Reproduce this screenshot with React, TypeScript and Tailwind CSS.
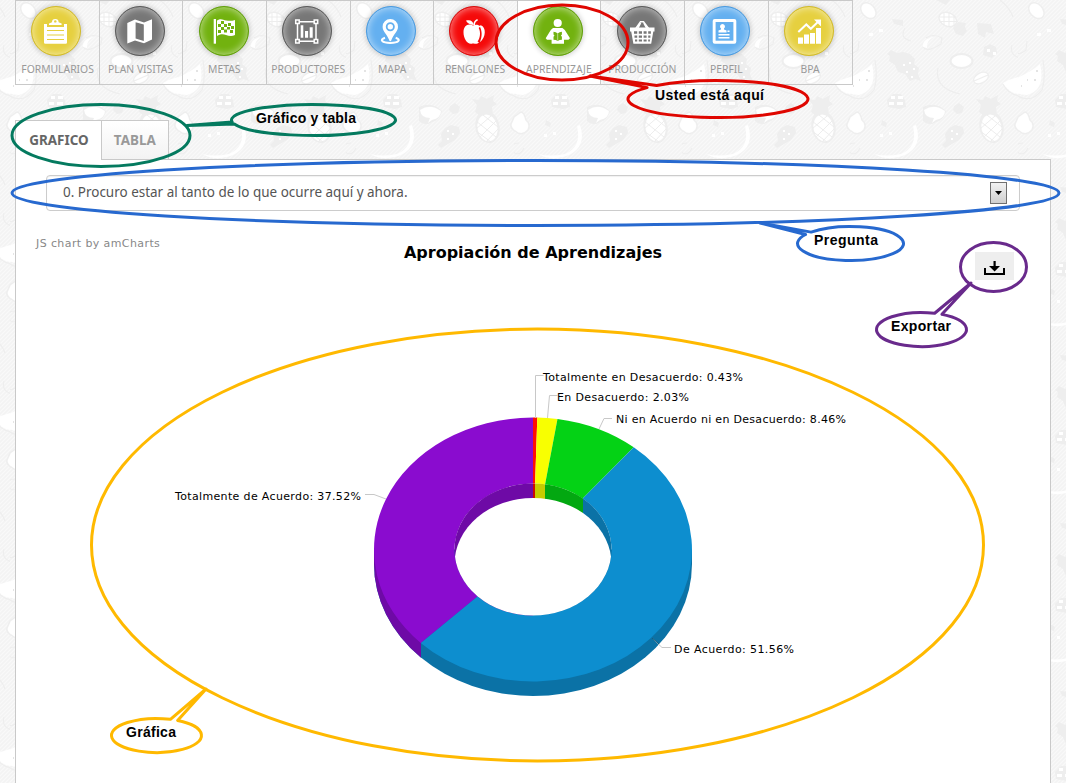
import React from "react";

const NavIcon = ({ name }: { name: string }) => {
  switch (name) {
    case "form":
      return (
        <g>
          <path d="M13 18h3v2h17v-2h3v18.5a1.2 1.2 0 0 1-1.2 1.2H14.2a1.2 1.2 0 0 1-1.2-1.2z" fill="#fff" />
          <path d="M18 19v-1.600l3-1.200a3.300 3.300 0 1 1 6.600 0l3 1.200V19z" fill="#fff" />
          <circle cx="24.300" cy="15.400" r="1.200" fill="#e6d03f" />
          <path d="M16 20.500h17M16 24.500h17M16 29h17M16 33.500h17" stroke="#e6d03f" strokeWidth="1.200" />
        </g>
      );
    case "map":
      return (
        <path
          fill="#fff"
          fillRule="evenodd"
          d="M12.300 17 20 13.400 29 16.400 37 13.300V33.500L29 37.200 20 34.600 12.300 37.500ZM20.600 16.200V32.600L28.800 35V18.600Z"
        />
      );
    case "flag":
      return (
        <g>
          <path d="M14.700 13H17v24.700h-2.300z" fill="#fff" />
          <path d="M18 14.500c4-2.500 6-.5 9 0s6 .5 9-.5v15c-3 1.500-6 1-9 0s-6-1-9 1z" fill="#fff" />
          <path
            fill="#72b20f"
            d="M22 15h3v3h-3zM29 17h3v3h-3zM19 18h3v3h-3zM25 18h3v3h-3zM32 20h3v3h-3zM22 21h3v3h-3zM28 21h3v2.500h-3zM19 24h3v3h-3zM25 23.500h3v3h-3zM31 24h3v3h-3z"
          />
        </g>
      );
    case "chart":
      return (
        <g>
          <path d="M15.500 15.700h18.500v19.600H15.500z" fill="none" stroke="#fff" strokeWidth="1.500" />
          <path
            d="M13.700 14h3.500v3.500h-3.500zM32.200 14h3.500v3.500h-3.500zM13.700 33.500h3.500V37h-3.500zM32.200 33.500h3.500V37h-3.500z"
            fill="#777"
            stroke="#fff"
            strokeWidth="1.500"
          />
          <path d="M18.700 19.300h2.600v12.400h-2.600zM23 25h3.100v6.700H23zM27.700 21.300h3v10.400h-3z" fill="#fff" />
        </g>
      );
    case "pin":
      return (
        <g>
          <path
            fill="#fff"
            d="M24.300 13a7.700 7.700 0 0 1 7.700 7.700c0 4.800-4.500 7.500-6.700 13.500a1 1 0 0 1-2 0C21 28.200 16.600 25.500 16.600 20.700a7.700 7.700 0 0 1 7.700-7.700Z"
          />
          <circle cx="24.300" cy="20.700" r="3.600" fill="#fff" stroke="#64b0f0" strokeWidth="1.800" />
          <path d="M19 31.800c-6 2-3 5 5.300 5.200 8.400-.2 11.300-3.200 5.400-5.200" fill="none" stroke="#fff" strokeWidth="2" />
        </g>
      );
    case "apple":
      return (
        <g fill="#fff">
          <path d="M24 19.500c-5-2.700-9.500.2-9.500 6.700 0 6.200 4 12.500 8.200 11.500 1-.3 2-.3 3 0 2 .3 3-.2 4.300-1.500l-1.500-.8c2.500-3 3.600-8.800 1.200-13.400l1.700-1.500c-2-2-5-2-7.400-1z" />
          <path d="M31.800 19.300c5.500 1.500 5.500 12.500-1 16.900 2.400-5 2.700-11.500-.4-16.200z" />
          <path d="M24.500 19c-4-.3-6.500-1.800-7.500-4.400 4.400-1 7 .2 7.500 4.400Z" />
          <path d="M24.200 19c.3-3 1.600-4.700 4-6l.8 1.200c-2.300 1.200-3 2.700-3 4.800z" />
        </g>
      );
    case "reader":
      return (
        <g>
          <circle cx="24.700" cy="17" r="4.100" fill="#fff" />
          <path d="M20 22h9.400l2.400 2 5.200 8.300-1.500 1.500h-4.500v4H18.600v-4H14l-1.300-1.500L17.800 24z" fill="#fff" />
          <path d="M20.500 25.700q2.500.2 4.200 1.700 1.700-1.500 4.200-1.700v2.800l-1 1 1 1.200v3q-2.500 0-4.200 1.300-1.700-1.300-4.200-1.300v-3l1-1.200-1-1z" fill="#72b20f" />
          <path d="M24.700 27.500v7" stroke="#fff" strokeWidth=".5" />
        </g>
      );
    case "basket":
      return (
        <g>
          <path d="m18.500 23 5-7.300h3L32 23M21 22l2.600-5M29.500 22l-2.700-5" fill="none" stroke="#fff" strokeWidth="1.500" />
          <path d="M13 21.500h24.500v4h-1.200l-2.100 12.200H16.400l-2.200-12.200H13z" fill="#fff" />
          <path
            d="M17 25.300h3.200v2.400H17zM21.800 25.300H25v2.400h-3.200zM26.600 25.300h3v2.400h-3zM31.200 25.300h2.700v2.400h-2.700zM17.500 29.500h2.700v2.300h-2.700zM21.800 29.500H25v2.300h-3.200zM26.600 29.500h3v2.300h-3zM31.200 29.500h2.200v2.300h-2.200zM18 33.500h2.200v2h-2.200zM21.800 33.500H25v2h-3.200zM26.600 33.500h3v2h-3zM31.200 33.500h1.700v2h-1.700z"
            fill="#777"
          />
        </g>
      );
    case "profile":
      return (
        <g>
          <rect x="12.700" y="13" width="23.600" height="24.700" rx="2" fill="#fff" />
          <rect x="15.600" y="16" width="17.800" height="18.700" fill="#64b0f0" />
          <path d="M22.500 18a2.500 2.500 0 0 1 1.500 4.500v1l2.500 1v2h-8v-2l2.500-1v-1A2.500 2.500 0 0 1 22.500 18ZM18.500 28h11v1.400h-11zM18.500 31h11v1.400h-11zM27.500 24.500h2v1.500h-2z" fill="#fff" />
        </g>
      );
    default:
      return (
        <g>
          <path d="M14 31.500h5v6.200h-5zM20 28.500h5v9.200h-5zM26 27h5v10.700h-5zM32 22h5v15.700h-5z" fill="#fff" />
          <path d="m14.300 26 8-7.500 4.500 4.300 7.300-7" fill="none" stroke="#fff" strokeWidth="2" />
          <path d="M30 13.500h7v7z" fill="#fff" />
        </g>
      );
  }
};

const yellow = "bg-[#e6d03f] border-[#d2bb2c]";
const gray = "bg-[#777777] border-[#5c5c5c]";
const green = "bg-[#72b20f] border-[#62a00c]";
const blue = "bg-[#64b0f0] border-[#4a9be0]";
const red = "bg-[#f50a0a] border-[#d81010]";

const items = [
  { label: "FORMULARIOS", icon: "form", tone: yellow },
  { label: "PLAN VISITAS", icon: "map", tone: gray },
  { label: "METAS", icon: "flag", tone: green },
  { label: "PRODUCTORES", icon: "chart", tone: gray },
  { label: "MAPA", icon: "pin", tone: blue },
  { label: "RENGLONES", icon: "apple", tone: red },
  { label: "APRENDIZAJE", icon: "reader", tone: green, active: true },
  { label: "PRODUCCIÓN", icon: "basket", tone: gray },
  { label: "PERFIL", icon: "profile", tone: blue },
  { label: "BPA", icon: "bpa", tone: yellow },
];

const FruitWallpaper = () => (
  <svg className="absolute inset-0 -z-10" width="1066" height="783" aria-hidden="true">
    <defs>
      <pattern id="weave" width="4" height="4" patternUnits="userSpaceOnUse">
        <rect width="4" height="4" fill="#f3f3f3" />
        <path d="M0 4 4 0M-1 1 1-1M3 5 5 3" stroke="#fafafa" strokeWidth="1.200" />
      </pattern>
      <pattern id="fruit" x="850" y="0" width="168" height="168" patternUnits="userSpaceOnUse">
        <g fill="#eeeeee">
          <path d="m103 28 5-6 8 1-1 4 2 4-4 5-7-2z" />
          <ellipse cx="98" cy="19.500" rx="10" ry="7.500" transform="rotate(25 98 19)" />
          <path d="m41 50 6 3 6-1 7 2 5 5-1 5 5 4-1 6 3 7-6-2-5 2-5-7-7-2-3-7-6-4 1-5-3-2z" />
          <path d="m37 100 6-6 8 0 4 6 1 7-7 2-11-2z" />
          <path d="m129 112 2-7-5-6 7 1 2-4 6 3 7-4-1 6 4 3-5 3 1 8-9 4z" />
          <ellipse cx="141.500" cy="127" rx="12" ry="16.500" transform="rotate(-12 141 127)" />
          <path d="m95 134 4-6 6-3 8 2 1 6-5 7-7 4-7 4-3-3 4-4z" />
          <path d="m134 47 6-3 6 3 1 6-5 5-9-3zM104 106l5-3 5 4-2 6-5 1-4-4zM127 23l14 1 3 10-8-2-1 6-7-4zM42 19l11 1v6l-9-2zM86 0h14l-4 5zM32 120l5 3-1 4-5-2z" />
          <path d="M73 107q13-6 23 4-2 9-10 11-7 5-13-1z" />
        </g>
        <g fill="#fff">
          <ellipse cx="18.500" cy="11" rx="6.500" ry="9" transform="rotate(-43 18 11)" stroke="#eee" strokeWidth="1.500" />
          <path d="M-15 83Q10 75 22 64 28 90 9 95-7 94-15 83Z" />
          <ellipse cx="111.500" cy="61" rx="11" ry="7" stroke="#eee" strokeWidth="2" />
          <ellipse cx="131" cy="78" rx="8" ry="5" transform="rotate(-28 131 78)" stroke="#eee" strokeWidth="1.300" />
          <path d="M74 110q10-7 21 1 0 7-9 9l-4 3 2-5q-9 0-10-8Z" />
          <path d="M0 117 7 112q3 0 5 8 5 4 2 10-6 7-13 1-5-3-4-7Z" stroke="#eee" strokeWidth="1.500" />
          <path d="M168 117 175 112q3 0 5 8 5 4 2 10-6 7-13 1-5-3-4-7Z" stroke="#eee" strokeWidth="1.500" />
          <path d="M63 126q5 21-12 28-15 3-27 0 15 8 31 1 18-9 11-30Z" />
          <path d="M73 47q-1-8 11-10-8 3-7 11zM41 96h4v3h-4zM48 96h5v3h-5zM39 102h5v3h-5zM47 102h6v3h-6zM29 29h4v3h-4zM19 33h4v3h-4zM30 134h3v3h-3zM39 132h3v3h-3z" />
          <path d="M53 64h2v2h-2zM59 62h2v2h-2zM56 71h2v2h-2zM63 68h2v2h-2zM61 76h2v2h-2zM137 49h3v3h-3zM143 52h3v3h-3zM101 130h2v2h-2zM106 133h2v2h-2zM101 138h2v2h-2z" />
        </g>
        <ellipse cx="141.500" cy="128" rx="10" ry="13.500" transform="rotate(-12 141 128)" fill="#fff" />
        <path d="m130 121 20 16M130 131l15 11M137 115l15 12M151 120l-17 17M145 116l-15 13M152 129l-11 12" stroke="#ededed" />
        <ellipse cx="98" cy="19.500" rx="8.500" ry="6" transform="rotate(25 98 19)" fill="#fff" />
        <path d="M90 17h16M90 21.500h18M94 13v12M99 13v14M104 16v10" stroke="#ededed" />
        <g fill="none" stroke="#eeeeee" strokeWidth="1.200">
          <path d="M124 81l14-6M88 68q-4 20 22 26M55 28q-6 10 6 13M73 47q4 6 18-3l1-6q-9-5-16 0M-15 84Q9 110 24 90 28 78 25 60M153 84q6 12 20 12 15-2 20-12M162 45q-3 10 8 13M-6 45q3 14 14 5l1-9M150 0q10 8 13 17M5 143q-10 0-6 9 7 5 11-4" />
        </g>
        <path d="M153 83Q160 79 168 77v17Q159 93 153 83Z" fill="#fff" />
        <path d="M3 85h1v2H3zM9 79h1v2H9zM16 79h2v2h-2zM18 70h2v2h-2z" fill="#e4e4e4" />
      </pattern>
    </defs>
    <rect width="1066" height="783" fill="url(#weave)" />
    <rect width="1066" height="783" fill="url(#fruit)" />
  </svg>
);

const CX = 533;
const CY = 549.5;

const onEllipse = (rx: number, ry: number, share: number) => {
  const a = share * 2 * Math.PI;
  return `${(CX + rx * Math.sin(a)).toFixed(2)} ${(CY - ry * Math.cos(a)).toFixed(2)}`;
};

const slices = [
  { from: 0, to: 0.0043, color: "#ff0f00" },
  { from: 0.0043, to: 0.0246, color: "#f8ff01" },
  { from: 0.0246, to: 0.1092, color: "#04d215" },
  { from: 0.1092, to: 0.6248, color: "#0d8ecf" },
  { from: 0.6248, to: 1, color: "#8a0ccf" },
];

const Donut = () => (
  <svg className="block" width="1034" height="483" viewBox="16 300 1034 483">
    <defs>
      <clipPath id="hole">
        <ellipse cx={CX} cy={CY} rx="78.500" ry="66" />
      </clipPath>
      <clipPath id="leftWall">
        <path d="M370 540h51v170h-51z" />
      </clipPath>
    </defs>
    <path d="M374 549.500v14.500a159 132 0 0 0 318 0v-14.500z" fill="#0b72a6" />
    <path d="M374 549.500v14.500a159 132 0 0 0 318 0v-14.500z" fill="#6e0aa6" clipPath="url(#leftWall)" />
    {slices.map((s) => {
      const large = s.to - s.from > 0.5 ? 1 : 0;
      return (
        <path
          key={s.color}
          fill={s.color}
          d={`M${onEllipse(159, 132, s.from)}A159 132 0 ${large} 1 ${onEllipse(159, 132, s.to)}L${onEllipse(78.5, 66, s.to)}A78.5 66 0 ${large} 0 ${onEllipse(78.5, 66, s.from)}Z`}
        />
      );
    })}
    <g clipPath="url(#hole)">
      <path d="M450 480h83v140h-83z" fill="#6e0aa6" />
      <path d="M533 480h2v50h-2z" fill="#cc0c00" />
      <path d="M535 480h10v50h-10z" fill="#c6cc01" />
      <path d="M545 480h38v60h-38z" fill="#03a811" />
      <path d="M583 480h40v140h-40z" fill="#0b72a6" />
      <ellipse cx={CX} cy={CY + 14.5} rx="78.500" ry="66" fill="#fff" />
    </g>
    <g fill="none" stroke="#c8c8c8">
      <path d="M535.500 418v-42.500h8M547.500 418l2-22.500h8M599 429l5-10.500h8M386 499l-12-4.500h-9M652 638l10 9.500h9" />
    </g>
    <path d="m652 638 7 6" stroke="#09577e" />
    <g className="font-['DejaVu_Sans',sans-serif] text-[11px]" fill="#000">
      <text x="543" y="381" textLength="200">Totalmente en Desacuerdo: 0.43%</text>
      <text x="557" y="401" textLength="132">En Desacuerdo: 2.03%</text>
      <text x="616" y="423" textLength="230">Ni en Acuerdo ni en Desacuerdo: 8.46%</text>
      <text x="674" y="653" textLength="120">De Acuerdo: 51.56%</text>
      <text x="175" y="500" textLength="186">Totalmente de Acuerdo: 37.52%</text>
    </g>
  </svg>
);

type Note = {
  text: string;
  color: string;
  ring: [number, number, number, number];
  bubble: [number, number, number, number];
  gap: [number, number];
  tip: [number, number];
  label: [number, number, number];
};

const notes: Note[] = [
  { text: "Usted está aquí", color: "#df0600", ring: [562, 42.5, 66, 37.5], bubble: [718, 99, 90, 18.5], gap: [218, 227], tip: [590, 76], label: [655, 100, 109] },
  { text: "Gráfico y tabla", color: "#047a5f", ring: [101, 135.5, 89, 31], bubble: [313.5, 120, 82, 15.5], gap: [165, 173], tip: [187, 125.5], label: [256, 123, 100] },
  { text: "Pregunta", color: "#2769cf", ring: [535.5, 193, 523.5, 32.5], bubble: [850.5, 243.5, 53, 17], gap: [212, 222], tip: [760, 223], label: [814, 245, 64] },
  { text: "Exportar", color: "#692a8c", ring: [993.5, 267, 33, 24.5], bubble: [921.5, 329.5, 45, 17], gap: [287, 297], tip: [971, 283], label: [891, 331, 60] },
  { text: "Gráfica", color: "#ffb900", ring: [537.5, 545, 446, 216], bubble: [156.5, 735.5, 45, 17], gap: [288, 298], tip: [206, 689], label: [126, 737, 50] },
];

const Callout = ({ note }: { note: Note }) => {
  const [cx, cy, rx, ry] = note.bubble;
  const at = (deg: number) => {
    const t = (deg * Math.PI) / 180;
    return `${(cx + rx * Math.cos(t)).toFixed(2)} ${(cy + ry * Math.sin(t)).toFixed(2)}`;
  };
  const [rcx, rcy, rrx, rry] = note.ring;
  return (
    <g>
      <g fill="none" stroke={note.color} strokeWidth="3" strokeLinejoin="round">
        <ellipse cx={rcx} cy={rcy} rx={rrx} ry={rry} />
        <path d={`M${at(note.gap[1])}A${rx} ${ry} 0 1 1 ${at(note.gap[0])}L${note.tip[0]} ${note.tip[1]}Z`} />
      </g>
      <text
        x={note.label[0]}
        y={note.label[1]}
        textLength={note.label[2]}
        className="font-['Liberation_Sans',sans-serif] text-[14px] font-bold"
        fill="#000"
      >
        {note.text}
      </text>
    </g>
  );
};

export default function App() {
  return (
    <div className="relative isolate h-[783px] w-[1066px] overflow-hidden font-['Noto_Sans',sans-serif]">
      <FruitWallpaper />

      <nav className="ml-[15px] grid h-[85px] w-[838px] grid-cols-[repeat(10,83.63px)] border-y border-r border-[#c9c9c9]">
        {items.map((item) => (
          <a
            key={item.label}
            className={`flex flex-col items-center border-l border-[#c9c9c9] pt-[5px] ${item.active ? "bg-white" : ""}`}
          >
            <span
              className={`mr-[2px] block size-[50px] rounded-full border shadow-[0_0_5px_1px_rgba(0,0,0,0.18),inset_0_0_7px_1px_rgba(255,255,255,0.5)] ${item.tone}`}
            >
              <svg className="-ml-px -mt-px block" width="50" height="50" viewBox="0 0 50 50">
                <NavIcon name={item.icon} />
              </svg>
            </span>
            <span className="mt-[5px] scale-x-[0.94] whitespace-nowrap text-[11px] leading-4 text-[#999]">{item.label}</span>
          </a>
        ))}
      </nav>

      <div className="ml-[15px] mt-[35px] flex h-10 w-[154px] text-sm font-bold">
        <div className="relative z-10 flex w-[86px] items-center justify-center border-l border-t border-[#c9c9c9] bg-white pb-px text-[#666]">
          <span className="scale-x-[0.96]">GRAFICO</span>
        </div>
        <div className="flex h-[39px] flex-1 items-center justify-center border-x border-t border-[#c9c9c9] bg-linear-to-b from-white to-[#f3f3f3] text-[#999]">
          <span className="scale-x-[0.96]">TABLA</span>
        </div>
      </div>

      <main className="-mt-px ml-[15px] h-[640px] w-[1036px] border border-[#c9c9c9] bg-white pt-[15px]">
        <div className="ml-[30px] flex h-9 w-[974px] items-center justify-between rounded border border-[#ccc] pb-0.5 pl-4 pr-3 shadow-[inset_0_1px_1px_rgba(0,0,0,0.06)]">
          <span className="origin-left scale-x-[0.962] text-sm text-[#555]">0. Procuro estar al tanto de lo que ocurre aquí y ahora.</span>
          <button className="mt-0.5 flex h-[22px] w-[17px] items-center justify-center border border-[#707070] bg-linear-to-b from-[#f2f2f2] to-[#cfcfcf]">
            <svg width="7" height="4" viewBox="0 0 7 4">
              <path d="M0 0h7L3.500 4z" />
            </svg>
          </button>
        </div>

        <div className="grid h-[89px] grid-cols-[1fr_auto_1fr] items-start font-['DejaVu_Sans',sans-serif]">
          <span className="pl-5 pt-[25px] text-[11px] leading-4 tracking-[0.4px] text-[#888]">JS chart by amCharts</span>
          <h1 className="pt-[30px] text-base font-bold leading-6 text-black">Apropiación de Aprendizajes</h1>
          <button className="mr-9 mt-[41px] flex h-7 w-[39px] items-center justify-center justify-self-end bg-[#eee]">
            <svg className="mt-[3px]" width="21" height="14" viewBox="0 0 21 14">
              <path d="M1 7v6h19V7" fill="none" stroke="#000" strokeWidth="2" />
              <path d="M9.500 0h2.200v5H16l-5.400 5.500L5 5h4.500z" />
            </svg>
          </button>
        </div>

        <Donut />
      </main>

      <svg className="pointer-events-none absolute inset-0 z-20" width="1066" height="783">
        {notes.map((note) => (
          <Callout key={note.text} note={note} />
        ))}
      </svg>
    </div>
  );
}
